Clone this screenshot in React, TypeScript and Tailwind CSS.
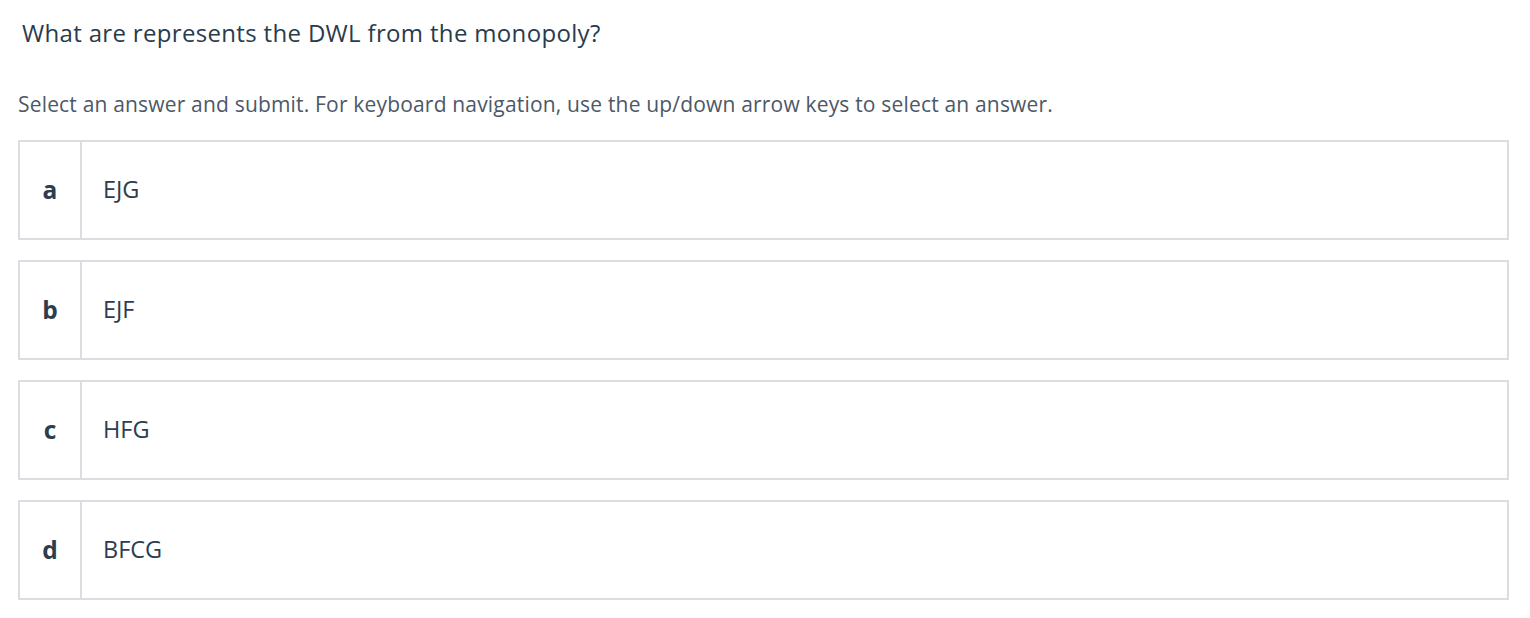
const options = [
  { key: 'a', text: 'EJG' },
  { key: 'b', text: 'EJF' },
  { key: 'c', text: 'HFG' },
  { key: 'd', text: 'BFCG' },
];

export default function App() {
  return (
    <div className="min-h-screen bg-white pl-[18px] pr-[21px] pt-[16px] font-['Open_Sans','Noto_Sans',sans-serif]">
      <h1 className="pl-[4px] text-[24px] leading-[34px] tracking-[0.33px] text-[#2a3b4d]">
        What are represents the DWL from the monopoly?
      </h1>
      <p className="mt-[40px] text-[21px] leading-[28px] tracking-[0.18px] text-[#4c5868]">
        Select an answer and submit. For keyboard navigation, use the up/down arrow keys to select an answer.
      </p>
      <ul className="mt-[22px] flex list-none flex-col gap-[20px]">
        {options.map((o) => (
          <li key={o.key}>
            <button
              type="button"
              className="flex h-[100px] w-full cursor-pointer items-stretch border-2 border-[#dadde2] bg-white text-left"
            >
              <span className="flex w-[62px] shrink-0 items-center justify-center border-r-2 border-[#dadde2] text-[24.5px] font-bold text-[#2c3d4f]">
                {o.key}
              </span>
              <span className="flex items-center pl-[21px] text-[23.5px] text-[#2c3d4f]">
                {o.text}
              </span>
            </button>
          </li>
        ))}
      </ul>
    </div>
  );
}
